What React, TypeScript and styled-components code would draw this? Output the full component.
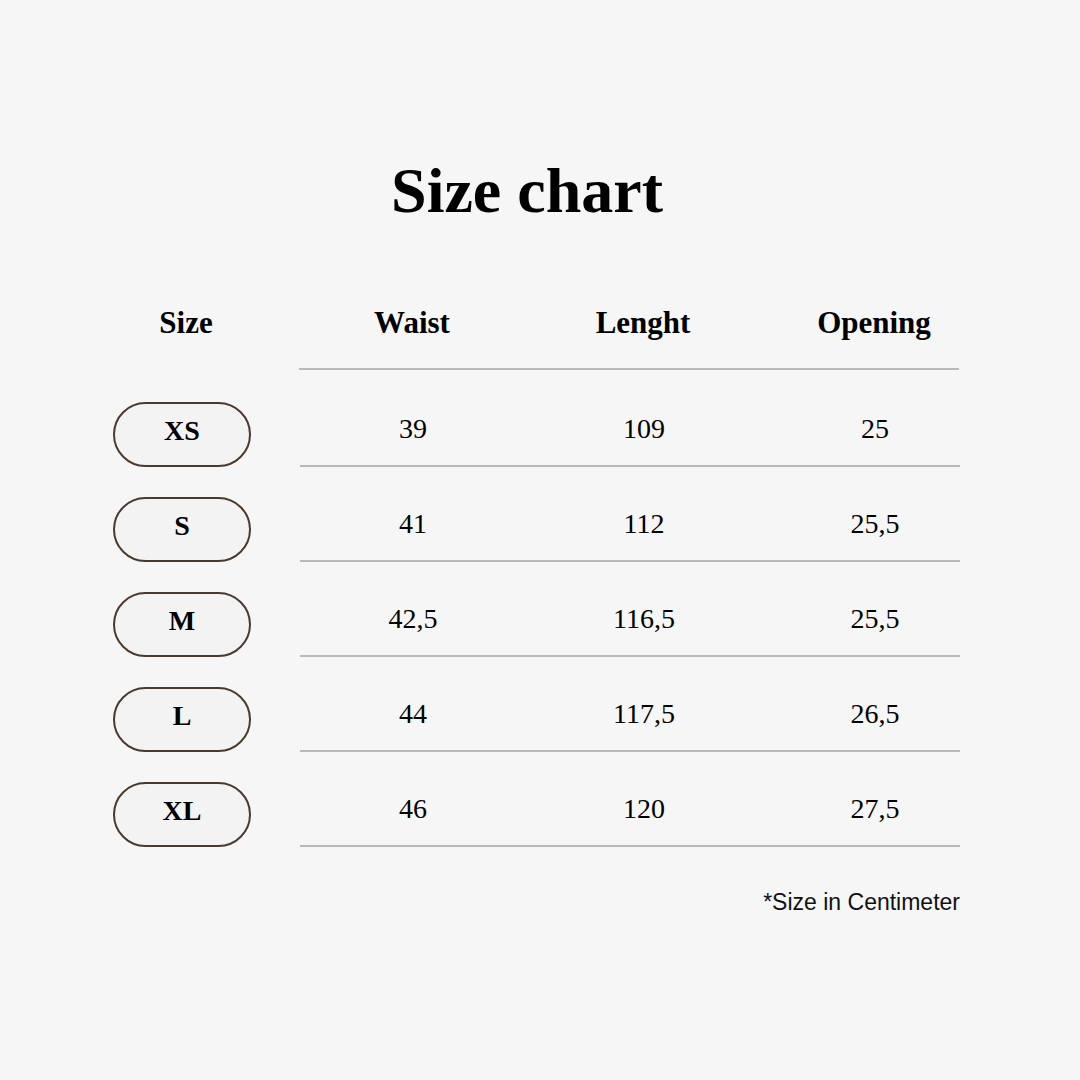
import React from "react";
import styled, { createGlobalStyle } from "styled-components";

const sizes = [
  { size: "XS", waist: "39", length: "109", opening: "25" },
  { size: "S", waist: "41", length: "112", opening: "25,5" },
  { size: "M", waist: "42,5", length: "116,5", opening: "25,5" },
  { size: "L", waist: "44", length: "117,5", opening: "26,5" },
  { size: "XL", waist: "46", length: "120", opening: "27,5" },
];

const App = () => {
  return (
    <>
      <GlobalStyle />
      <Page>
        <Title>Size chart</Title>
        <Table>
          <HeadRow>
            <SizeHead>Size</SizeHead>
            <Cells header>
              <span>Waist</span>
              <span>Lenght</span>
              <span>Opening</span>
            </Cells>
          </HeadRow>
          {sizes.map((x) => (
            <Row key={x.size}>
              <Pill>{x.size}</Pill>
              <Cells>
                <span>{x.waist}</span>
                <span>{x.length}</span>
                <span>{x.opening}</span>
              </Cells>
            </Row>
          ))}
          <Note>*Size in Centimeter</Note>
        </Table>
      </Page>
    </>
  );
};

export default App;

const GlobalStyle = createGlobalStyle`
  body {
    margin: 0;
    background: #f6f6f6;
  }
`;

const Page = styled.div`
  width: 1080px;
  height: 1080px;
  padding-top: 159px;
  box-sizing: border-box;
  background: #f6f6f6;
  font-family: "Liberation Serif", "Times New Roman", serif;
  color: #000;
`;

const Title = styled.h1`
  margin: 0;
  padding-right: 26px;
  font-size: 64px;
  line-height: 64px;
  font-weight: 700;
  text-align: center;
`;

const Table = styled.div`
  width: 847px;
  margin: 80px 0 0 113px;
`;

const Row = styled.div`
  display: flex;
  align-items: flex-end;
`;

const HeadRow = styled(Row)`
  margin-bottom: 2px;
`;

const SizeHead = styled.div`
  width: 137px;
  padding: 0 0 29px 9px;
  box-sizing: border-box;
  text-align: center;
  font-size: 31px;
  line-height: 36px;
  font-weight: 700;
`;

const Pill = styled.div`
  width: 138px;
  height: 65px;
  box-sizing: border-box;
  padding-bottom: 8px;
  display: flex;
  align-items: center;
  justify-content: center;
  border: 2px solid #4a392e;
  border-radius: 33px;
  background: #f3f3f3;
  font-size: 28px;
  font-weight: 700;
`;

const Cells = styled.div<{ header?: boolean }>`
  width: 660px;
  height: ${(p) => (p.header ? "67px" : "95px")};
  margin-left: 49px;
  box-sizing: border-box;
  padding: ${(p) => (p.header ? "0 0 27px" : "20px 0 0")};
  display: grid;
  grid-template-columns: 226px 236px 226px;
  align-items: ${(p) => (p.header ? "end" : "center")};
  justify-items: center;
  border-bottom: 2px solid #b9b9b9;
  font-size: ${(p) => (p.header ? "31px" : "28px")};
  line-height: 36px;
  font-weight: ${(p) => (p.header ? 700 : 400)};
`;

const Note = styled.p`
  margin: 42px 0 0;
  text-align: right;
  font-family: "Liberation Sans", Arial, sans-serif;
  font-size: 23px;
  line-height: 26px;
  color: #111;
`;
